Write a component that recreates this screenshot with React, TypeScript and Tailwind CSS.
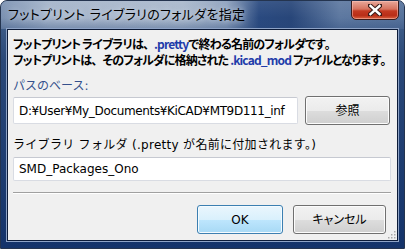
import React from 'react';

const ui = "font-['DejaVu_Sans','Noto_Sans_CJK_JP',sans-serif]";
const jp = "font-['Noto_Sans_CJK_JP',sans-serif]";

// full-width punctuation inside proportional text
function Pu({ c }: { c: string }) {
  return <span className="[font-feature-settings:normal]">{c}</span>;
}

function GreyButton({ label, className }: { label: string; className?: string }) {
  return (
    <button
      className={`h-[29px] rounded-[3px] border border-[#707070] bg-[linear-gradient(to_bottom,#f2f2f2_0%,#ebebeb_50%,#dddddd_51%,#cfcfcf_100%)] shadow-[inset_0_0_0_1px_#fcfcfc] text-[12px] text-black [font-feature-settings:'palt'] ${className ?? ''}`}
    >
      {label}
    </button>
  );
}

export default function App() {
  return (
    <div
      className={`w-[405px] h-[249px] flex flex-col overflow-hidden rounded-t-[7px] border border-[#24344f] bg-[linear-gradient(to_bottom,#4a6890_0px,#2a4878_60px,#14336a_100%)] ${ui}`}
    >
      {/* title bar */}
      <div className="relative h-[28px] shrink-0 bg-[linear-gradient(to_right,#7b91b1_0%,#a4b4ca_12%,#a9b8cc_45%,#8da1bd_56%,#2a4a80_64%,#284679_72%,#5d78a0_84%,#56729b_100%)]">
        <div className="absolute inset-0 bg-[linear-gradient(to_bottom,rgba(255,255,255,0.08)_0%,rgba(40,70,120,0.0)_60%,rgba(40,70,120,0.35)_100%)]" />
        <span className="relative block pl-[7px] pt-[6px] text-[13px] leading-[16px] tracking-[0.3px] text-black [font-feature-settings:'palt'] [text-shadow:0_0_6px_rgba(230,236,245,0.9)]">
          フットプリント ライブラリのフォルダを指定
        </span>
        {/* close button */}
        <div className="absolute right-[5px] top-[-1px] w-[48px] h-[20px] rounded-b-[5px] border border-[#3b1c1c] bg-[linear-gradient(to_bottom,#e8a89a_0%,#d6725e_45%,#c33a22_55%,#b92e18_80%,#d9623f_100%)] shadow-[inset_0_0_0_1px_rgba(255,200,190,0.5)] flex items-center justify-center">
          <svg width="14" height="12" viewBox="0 0 14 12">
            <path d="M2 1.5 L12 10.5 M12 1.5 L2 10.5" stroke="#3b1d1a" strokeWidth="4.5" strokeLinecap="square" />
            <path d="M2.5 2 L11.5 10 M11.5 2 L2.5 10" stroke="#ffffff" strokeWidth="2.4" strokeLinecap="square" />
          </svg>
        </div>
      </div>

      {/* client area */}
      <div className="relative mx-[6px] mb-[7px] flex-1 border border-[#0c1b38] shadow-[0_0_0_1px_#8ea3c6] bg-[#f0f0f0] pl-[5px] pr-[6px] pt-[6px] text-black">
        <div className={`${jp} text-[12px] leading-[16px] font-bold tracking-[-0.85px] whitespace-nowrap [font-feature-settings:'palt']`}>
          <p>
            フットプリント ライブラリは<Pu c="、" /><span className="text-[#1f3caa]">.pretty</span>で終わる名前のフォルダです<Pu c="。" />
          </p>
          <p>
            フットプリントは<Pu c="、" />そのフォルダに格納された <span className="text-[#1f3caa]">.kicad_mod</span> ファイルとなります<Pu c="。" />
          </p>
        </div>

        <p className="mt-[10px] text-[12px] leading-[16px] text-[#34508c]">パスのベース:</p>
        <div className="mt-[2px] flex items-center gap-[7px]">
          <div className="w-[285px] h-[27px] rounded-[2px] border border-[#d9dce3] border-t-[#c6c9d1] bg-white pl-[5px] flex items-center text-[12px] tracking-[-0.35px] whitespace-nowrap overflow-hidden">
            D:¥User¥My_Documents¥KiCAD¥MT9D111_inf
          </div>
          <GreyButton label="参照" className="w-[85px]" />
        </div>

        <p className="mt-[12px] text-[12px] leading-[16px] tracking-[0.3px] whitespace-nowrap">
          ライブラリ フォルダ (.pretty が名前に付加されます。)
        </p>
        <div className="mt-[4px] w-[378px] h-[24px] rounded-[2px] border border-[#d9dce3] border-t-[#c6c9d1] bg-white pl-[5px] flex items-center text-[12px]">
          SMD_Packages_Ono
        </div>

        <div className="mt-[11px] w-[378px] h-[2px] border-t border-[#a0a0a0] border-b border-b-white" />

        <div className="mt-[11px] flex justify-end gap-[10px] pr-[5px]">
          <button className="w-[86px] h-[29px] rounded-[3px] border border-[#3c7fb1] bg-[linear-gradient(to_bottom,#eaf6fd_0%,#d9f0fc_50%,#bee6fd_51%,#a7d9f5_100%)] shadow-[inset_0_0_0_1px_#f4fbff] text-[12px] text-black">
            OK
          </button>
          <GreyButton label="キャンセル" className="w-[93px]" />
        </div>

        {/* size grip */}
        <svg className="absolute right-[1px] bottom-[1px]" width="10" height="10" viewBox="0 0 10 10">
          {[
            [8, 2], [5, 5], [8, 5], [2, 8], [5, 8], [8, 8],
          ].map(([x, y], i) => (
            <rect key={i} x={x} y={y} width="1.5" height="1.5" fill="#a9a9a9" />
          ))}
        </svg>
      </div>
    </div>
  );
}
